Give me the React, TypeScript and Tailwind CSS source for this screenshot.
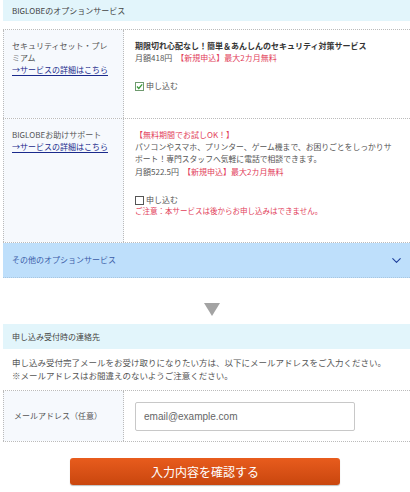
import { ChevronDown } from 'lucide-react';

const jp = "font-['Noto_Sans_CJK_JP','Noto_Sans',sans-serif]";

function CheckBox({ checked }: { checked?: boolean }) {
  return (
    <svg width="9" height="9" viewBox="0 0 9 9" className="shrink-0">
      <rect x="0.5" y="0.5" width="8" height="8" fill="white" stroke={checked ? '#6f9a6f' : '#555'} />
      {checked && <path d="M2 4.5 L3.8 6.5 L7.2 2.3" fill="none" stroke="#3a9a3a" strokeWidth="1.3" />}
    </svg>
  );
}

interface OptionRow {
  name: string[];
  body: React.ReactNode;
  checked: boolean;
  note?: string;
}

const rows: OptionRow[] = [
  {
    name: ['セキュリティセット・プレ', 'ミアム'],
    checked: true,
    body: (
      <>
        <div className="font-bold text-[#333]">期限切れ心配なし！簡単＆あんしんのセキュリティ対策サービス</div>
        <div>
          月額418円　<span className="text-[#e2405a]">【新規申込】最大2カ月無料</span>
        </div>
      </>
    ),
  },
  {
    name: ['BIGLOBEお助けサポート'],
    checked: false,
    note: 'ご注意：本サービスは後からお申し込みはできません。',
    body: (
      <>
        <div className="text-[#e2405a]">【無料期間でお試しOK！】</div>
        <div className="text-[7.8px] leading-[12px] pr-[6px]">
          パソコンやスマホ、プリンター、ゲーム機まで、お困りごとをしっかりサポート！専門スタッフへ気軽に電話で相談できます。
        </div>
        <div className="mt-[1px]">
          月額522.5円　<span className="text-[#e2405a]">【新規申込】最大2カ月無料</span>
        </div>
      </>
    ),
  },
];

export default function App() {
  return (
    <div className={`w-[410px] min-h-[492px] bg-white pl-[3px] text-[#444] ${jp}`}>
      {/* option services */}
      <div className="h-[21px] bg-[#e2f5fb] flex items-center pl-[9px] text-[8px] text-[#444]">
        BIGLOBEのオプションサービス
      </div>

      <div className="mt-[8px] border-t border-dotted border-[#bbb]">
        {rows.map((row, i) => (
          <div key={i} className="grid grid-cols-[121px_1fr] border-b border-dotted border-[#bbb]">
            <div className="bg-[#f6f9fd] border-l border-r border-dotted border-[#bbb] pl-[8px] pr-[12px] pt-[10px] text-[8px] leading-[12px] text-[#555]">
              {row.name.map((n) => (
                <div key={n}>{n}</div>
              ))}
              <a className="text-[#1a2a8c] underline underline-offset-2 decoration-[#1a2a8c]">→サービスの詳細はこちら</a>
            </div>
            <div className="pl-[11px] pr-[8px] pt-[10px] pb-[26px] text-[8px] leading-[12px] text-[#555]">
              {row.body}
              <div className="mt-[16px] flex items-center gap-[2px]">
                <CheckBox checked={row.checked} />
                <span>申し込む</span>
              </div>
              {row.note && <div className="text-[#e2405a] text-[7.5px] leading-[10px]">{row.note}</div>}
            </div>
          </div>
        ))}
      </div>

      {/* other options accordion */}
      <div className="h-[35px] bg-[#bedffb] border-b border-dotted border-[#a9c6e0] flex items-center justify-between pl-[9px] pr-[6px]">
        <span className="text-[8px] text-[#3b5ca8]">その他のオプションサービス</span>
        <ChevronDown className="w-[15px] h-[15px] text-[#1f3f9c]" strokeWidth={1.75} />
      </div>

      <div className="flex justify-center pt-[25px] pb-[8px] pl-[10px]">
        <div className="w-0 h-0 border-l-[8px] border-r-[8px] border-t-[13px] border-l-transparent border-r-transparent border-t-[#a3a3a3]" />
      </div>

      {/* contact */}
      <div className="h-[25px] bg-[#e2f5fb] flex items-center pl-[9px] text-[8px] text-[#444]">
        申し込み受付時の連絡先
      </div>
      <div className="pl-[9px] pt-[7px] text-[8.5px] leading-[12.5px] text-[#555]">
        <div>申し込み受付完了メールをお受け取りになりたい方は、以下にメールアドレスをご入力ください。</div>
        <div>※メールアドレスはお間違えのないようご注意ください。</div>
      </div>

      <div className="mt-[9px] grid grid-cols-[121px_1fr] border-t border-b border-dotted border-[#bbb] h-[52px]">
        <div className="bg-[#f6f9fd] border-l border-r border-dotted border-[#bbb] pl-[10px] flex items-center text-[8px] text-[#555]">
          メールアドレス（任意）
        </div>
        <div className="pl-[11px] flex items-center">
          <input
            type="text"
            placeholder="email@example.com"
            className="w-[220px] h-[29px] border border-[#c8c8c8] rounded-[2px] px-[8px] text-[10px] font-['Liberation_Sans',sans-serif] placeholder-[#666] outline-none"
          />
        </div>
      </div>

      <div className="flex justify-center pt-[16px] pr-[3px]">
        <button className="w-[270px] h-[27px] rounded-[3px] bg-gradient-to-b from-[#e85c1d] to-[#c9460e] text-white text-[12px] shadow-[0_1px_1px_rgba(0,0,0,0.25)]">
          入力内容を確認する
        </button>
      </div>
    </div>
  );
}
